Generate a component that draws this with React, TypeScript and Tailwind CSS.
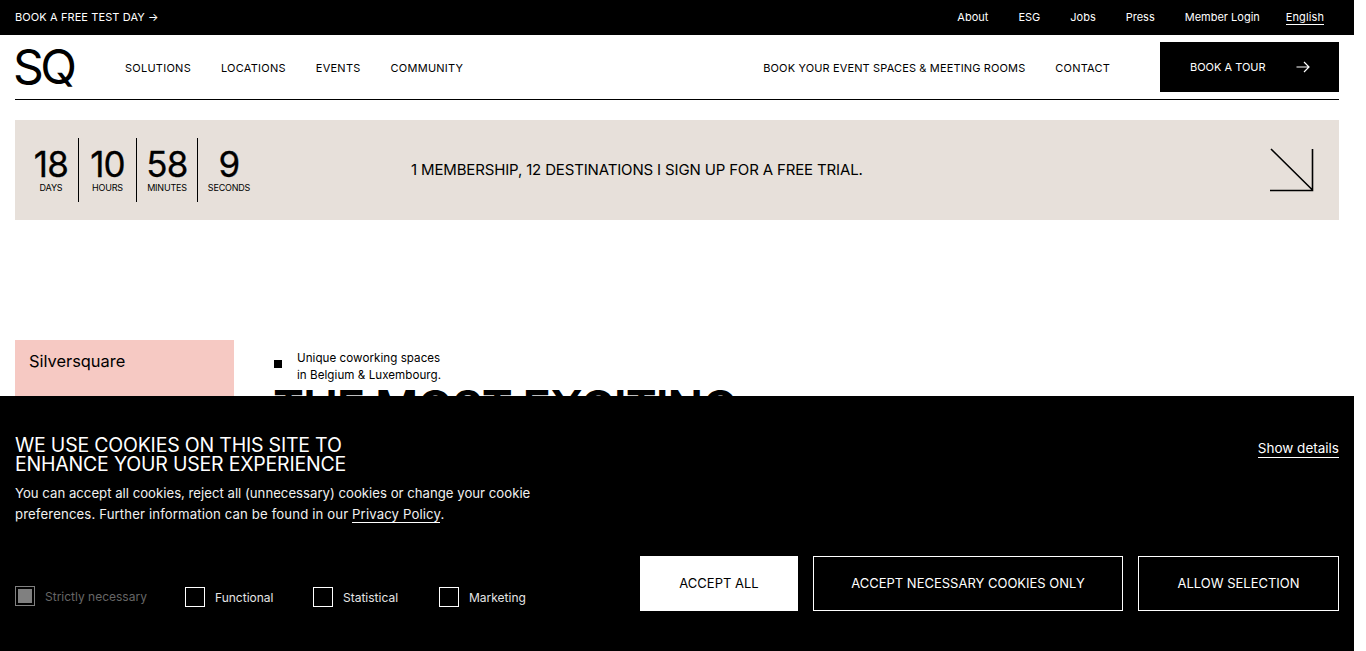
import React from 'react';

const topLinks = [
    { label: 'About', cls: 'ml-0' },
    { label: 'ESG', cls: 'ml-[30px]' },
    { label: 'Jobs', cls: 'ml-[30px]' },
    { label: 'Press', cls: 'ml-[30px]' },
    { label: 'Member Login', cls: 'ml-[30px]' },
];

const countdown = [
    { value: '18', label: 'DAYS', cls: 'w-[48px] pr-[6px]' },
    { value: '10', label: 'HOURS', cls: 'w-[58px] border-l' },
    { value: '58', label: 'MINUTES', cls: 'w-[61px] border-l' },
    { value: '9', label: 'SECONDS', cls: 'w-[63px] border-l' },
];

const ArrowRight = () => (
    <svg width="14" height="12" viewBox="0 0 14 12" fill="none" stroke="currentColor" strokeWidth="1.2">
        <path d="M0.5 6H13M8 1l5 5-5 5" />
    </svg>
);

const ArrowDownRight = () => (
    <svg width="44" height="44" viewBox="0 0 44 44" fill="none" stroke="black" strokeWidth="1.6">
        <path d="M1 1L42.5 42M42.5 1V42.5H0" />
    </svg>
);

const Check = ({ label, box, disabled }: { label: string; box: string; disabled?: boolean }) => (
    <label className={`flex items-center ${box} ${disabled ? '-mt-[2px]' : ''}`}>
        <span className={`flex h-5 w-5 items-center justify-center border ${disabled ? 'border-[#808080]' : 'border-white'}`}>
            {disabled && <span className="h-[14px] w-[14px] bg-[#808080]" />}
        </span>
        <span className={`ml-[10px] mt-[1px] text-[12px] ${disabled ? 'text-[#666]' : 'text-[#e5e5e5]'}`}>{label}</span>
    </label>
);

export default function App() {
    return (
        <div className="relative h-[651px] w-[1354px] overflow-hidden bg-white text-black" style={{ fontFamily: '"Inter", "Liberation Sans", sans-serif' }}>
            {/* top bar */}
            <div className="flex h-[35px] items-center justify-between bg-black pl-[15px] pr-[30px] text-[11px] text-white">
                <a className="tracking-[0.1px]">BOOK A FREE TEST DAY →</a>
                <div className="flex items-center">
                    {topLinks.map((l) => (
                        <a key={l.label} className={l.cls}>{l.label}</a>
                    ))}
                    <a className="ml-[26px] border-b border-white leading-[14px] tracking-[0.1px]">English</a>
                </div>
            </div>

            {/* main nav */}
            <div className="mx-[15px] flex h-[65px] items-center border-b border-black text-[11px]">
                <div className="-ml-[2px] w-[112px] text-[48px] font-normal leading-none tracking-[-3.5px]">SQ</div>
                <nav className="mt-[2px] flex gap-[30px] tracking-[0.25px]">
                    <a>SOLUTIONS</a>
                    <a>LOCATIONS</a>
                    <a>EVENTS</a>
                    <a>COMMUNITY</a>
                </nav>
                <div className="ml-auto flex items-center">
                    <a className="mt-[2px] tracking-[0.14px]">BOOK YOUR EVENT SPACES &amp; MEETING ROOMS</a>
                    <a className="ml-[30px] mt-[2px] tracking-[0.2px]">CONTACT</a>
                    <a className="ml-[50px] flex h-[50px] w-[179px] items-center bg-black pl-[30px] pr-[29px] text-white">
                        <span className="flex-1">BOOK A TOUR</span>
                        <ArrowRight />
                    </a>
                </div>
            </div>

            {/* promo banner */}
            <div className="mx-[15px] mt-5 flex h-[100px] items-center bg-[#e7e0da] pl-[15px] pr-[25px]">
                <div className="flex h-[64px]">
                    {countdown.map((c) => (
                        <div key={c.label} className={`flex flex-col items-center border-black ${c.cls}`}>
                            <span className="mt-[9px] text-[35px] leading-[35px] tracking-[-0.8px] [-webkit-text-stroke:0.3px_black]">{c.value}</span>
                            <span className="text-[9px] leading-[12px] tracking-[-0.2px]">{c.label}</span>
                        </div>
                    ))}
                </div>
                <p className="ml-[151px] flex-1 text-[15px] tracking-[-0.15px]">1 MEMBERSHIP, 12 DESTINATIONS I SIGN UP FOR A FREE TRIAL.</p>
                <ArrowDownRight />
            </div>

            {/* content under the cookie banner */}
            <div className="mx-[15px] mt-[120px] flex">
                <div className="h-[120px] w-[219px] bg-[#f6c9c3] px-[14px] py-[10px] text-[16.4px] leading-[22px]">Silversquare</div>
                <div className="ml-10">
                    <div className="flex items-center">
                        <span className="mt-[4px] h-2 w-2 bg-black" />
                        <p className="ml-[15px] mt-[10px] text-[11.6px] leading-[17px] tracking-[0.05px]">
                            Unique coworking spaces<br />in Belgium &amp; Luxembourg.
                        </p>
                    </div>
                    <h1 className="-ml-[1px] mt-[3px] text-[47px] font-semibold leading-[40px] tracking-[-1.1px]">THE MOST EXCITING</h1>
                </div>
            </div>

            {/* cookie banner */}
            <div className="absolute inset-x-0 bottom-0 flex h-[255px] flex-col bg-black px-[15px] text-white">
                <div className="mt-[39px] flex items-start justify-between">
                    <div>
                        <h2 className="mt-[1px] text-[19.5px] leading-[19px] tracking-[-0.2px]">WE USE COOKIES ON THIS SITE TO<br />ENHANCE YOUR USER EXPERIENCE</h2>
                        <p className="mt-[9px] w-[540px] text-[13.2px] leading-[21px] text-[#f0f0f0]">
                            You can accept all cookies, reject all (unnecessary) cookies or change your cookie<br />
                            <span className="tracking-[0.12px]">preferences. Further information can be found in our <a className="border-b border-white">Privacy Policy</a>.</span>
                        </p>
                    </div>
                    <a className="mt-[4px] border-b border-white text-[13.5px] leading-[18px]">Show details</a>
                </div>
                <div className="mt-[31px] flex items-center">
                    <div className="mt-[27px] flex items-center">
                        <Check label="Strictly necessary" box="w-[170px]" disabled />
                        <Check label="Functional" box="w-[128px]" />
                        <Check label="Statistical" box="w-[126px]" />
                        <Check label="Marketing" box="w-[201px]" />
                    </div>
                    <button className="h-[55px] w-[158px] bg-white text-[13px] text-black">ACCEPT ALL</button>
                    <button className="ml-[15px] h-[55px] w-[310px] border border-white text-[13px]">ACCEPT NECESSARY COOKIES ONLY</button>
                    <button className="ml-[15px] h-[55px] w-[201px] border border-white text-[13px]">ALLOW SELECTION</button>
                </div>
            </div>
        </div>
    );
}
